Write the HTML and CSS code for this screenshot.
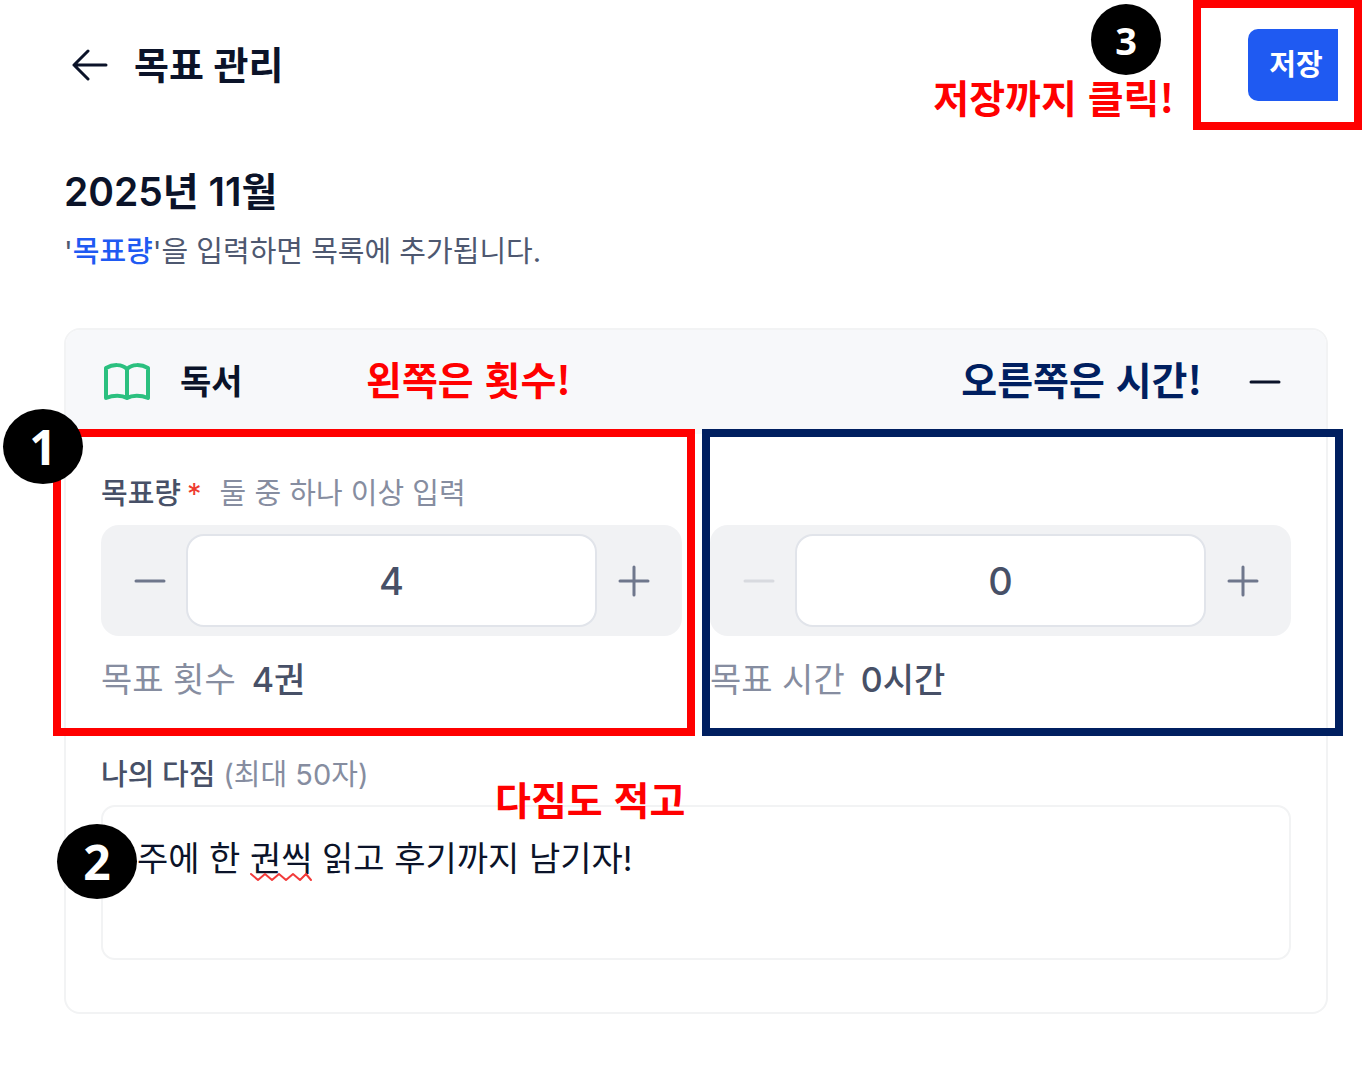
FILE: index.html
```html
<!DOCTYPE html>
<html lang="ko">
<head>
    <meta charset="UTF-8">
    <meta name="viewport" content="width=device-width, initial-scale=1">
    <title>목표 관리</title>

    <link rel="stylesheet" href="styles.css">
</head>
<body>
    <header class="topbar">
        <a class="back" href="#" aria-label="뒤로">
            <svg width="36" height="32" viewBox="0 0 36 32"><path d="M34 16H2M16 2L2 16l14 14"/></svg>
        </a>
        <h1 class="title">목표 관리</h1>
        <button class="save" type="button">저장</button>
        <div class="frame frame-save"></div>
        <span class="badge badge-save">3</span>
        <span class="callout callout-save">저장까지 클릭!</span>
    </header>

    <main class="content">
        <h2 class="month">2025년 11월</h2>
        <p class="guide">'<span class="accent">목표량</span>'을 입력하면 목록에 추가됩니다.</p>

        <section class="card">
            <div class="card-header">
                <svg class="book" width="46" height="38" viewBox="0 0 46 38">
                    <path d="M23 6C18 1 9 1 2 5v30c7-3 16-3 21 0 5-3 14-3 21 0V5C37 1 28 1 23 6zM23 6v29"/>
                </svg>
                <h3 class="card-title">독서</h3>
                <button class="icon-button collapse" type="button" aria-label="접기">
                    <svg class="icon" viewBox="0 0 24 24"><path d="M5 12h14"/></svg>
                </button>
                <span class="callout callout-count">왼쪽은 횟수!</span>
                <span class="callout callout-time">오른쪽은 시간!</span>
            </div>

            <div class="card-body">
                <div class="label-row">
                    <label class="label" for="count">목표량</label>
                    <span class="required">*</span>
                    <span class="hint">둘 중 하나 이상 입력</span>
                </div>

                <div class="goals">
                    <div class="goal">
                        <div class="stepper">
                            <button class="icon-button" type="button" aria-label="횟수 줄이기">
                                <svg class="icon" viewBox="0 0 24 24"><path d="M5 12h14"/></svg>
                            </button>
                            <input id="count" class="amount" type="text" inputmode="numeric" value="4">
                            <button class="icon-button" type="button" aria-label="횟수 늘리기">
                                <svg class="icon" viewBox="0 0 24 24"><path d="M5 12h14M12 5v14"/></svg>
                            </button>
                        </div>
                        <div class="total"><span class="total-name">목표 횟수</span><span>4권</span></div>
                        <div class="frame frame-count"></div>
                        <span class="badge badge-count">1</span>
                    </div>
                    <div class="goal">
                        <div class="stepper">
                            <button class="icon-button" type="button" aria-label="시간 줄이기" disabled>
                                <svg class="icon" viewBox="0 0 24 24"><path d="M5 12h14"/></svg>
                            </button>
                            <input id="time" class="amount" type="text" inputmode="numeric" value="0" aria-label="목표 시간">
                            <button class="icon-button" type="button" aria-label="시간 늘리기">
                                <svg class="icon" viewBox="0 0 24 24"><path d="M5 12h14M12 5v14"/></svg>
                            </button>
                        </div>
                        <div class="total"><span class="total-name">목표 시간</span><span>0시간</span></div>
                        <div class="frame frame-time"></div>
                    </div>
                </div>

                <div class="label-row pledge-label">
                    <label class="label" for="pledge">나의 다짐 <span class="limit">(최대 50자)</span></label>
                </div>
                <div class="pledge">
                    <textarea id="pledge" class="pledge-input" maxlength="50" spellcheck="false">주에 한 권씩 읽고 후기까지 남기자!</textarea>
                    <svg class="squiggle" width="62" height="10" viewBox="0 0 62 10">
                        <path d="M1 2l7 6 7-6 7 6 7-6 7 6 7-6 7 6 6-6 5 6"/>
                    </svg>
                    <span class="badge badge-pledge">2</span>
                    <span class="callout callout-pledge">다짐도 적고</span>
                </div>
            </div>
        </section>
    </main>
</body>
</html>
```
FILE: styles.css
```css
* {
    box-sizing: border-box;
}

body {
    margin: 0;
    background: #ffffff;
    color: #0b1329;
    font-family: Inter, "Noto Sans CJK KR", sans-serif;
    font-size: 34px;
    line-height: 48px;
}

h1, h2, h3, p {
    margin: 0;
}

button, input, textarea {
    font: inherit;
    color: inherit;
}

svg {
    display: block;
    fill: none;
    stroke: currentColor;
    stroke-linecap: round;
    stroke-linejoin: round;
}

/* top bar */
.topbar {
    position: relative;
    display: flex;
    align-items: center;
    height: 130px;
    padding: 0 24px 0 72px;
}

.back {
    color: #0b1329;
    stroke-width: 3px;
}

.title {
    flex: 1;
    margin-left: 26px;
    font-size: 38px;
    font-weight: 600;
}

.save {
    width: 90px;
    height: 72px;
    padding: 0 0 0 6px;
    border: 0;
    border-radius: 10px 0 0 10px;
    background: #1f5af2;
    color: #ffffff;
    font-size: 29px;
    font-weight: 600;
}

.content {
    padding: 36px 34px 48px 64px;
}

.month {
    font-size: 39px;
    font-weight: 600;
    line-height: 52px;
}

.guide {
    margin-top: 13px;
    color: #4e5870;
    font-size: 29px;
    line-height: 42px;
}

.accent {
    color: #1f5af2;
    font-weight: 500;
}

/* card */
.card {
    margin-top: 55px;
    border: 2px solid #f2f3f4;
    border-radius: 16px;
}

.card-header {
    position: relative;
    display: flex;
    align-items: center;
    height: 104px;
    padding: 0 36px 0 38px;
    border-radius: 14px 14px 0 0;
    background: #f7f8fa;
}

.book {
    color: #2bc07f;
    stroke-width: 4px;
}

.card-title {
    flex: 1;
    margin-left: 30px;
    font-size: 34px;
    font-weight: 600;
}

.card-body {
    padding: 39px 35px 52px;
}

.label-row {
    display: flex;
    color: #475067;
    font-size: 29px;
    line-height: 42px;
}

.label {
    font-weight: 500;
}

.required {
    margin-left: 6px;
    color: #ee3b2f;
}

.hint {
    margin-left: 18px;
}

.hint, .limit, .total-name {
    color: #868da0;
    font-weight: 400;
}

.goals {
    display: grid;
    grid-template-columns: repeat(2, minmax(0, 1fr));
    gap: 28px;
    margin-top: 10px;
}

.goal {
    position: relative;
}

.stepper {
    display: flex;
    height: 111px;
    padding: 9px 12px;
    border-radius: 18px;
    background: #f1f2f4;
}

.icon-button {
    display: flex;
    align-items: center;
    justify-content: center;
    flex: 0 0 73px;
    padding: 0;
    border: 0;
    background: none;
    color: #6f778c;
}

.icon-button:disabled {
    color: #d8dadf;
}

.collapse {
    flex-basis: 50px;
    color: #0b1329;
}

.icon {
    width: 48px;
    height: 48px;
    stroke-width: 1.5px;
}

.amount {
    flex: 1;
    min-width: 0;
    padding: 0;
    border: 2px solid #e1e4ea;
    border-radius: 18px;
    background: #ffffff;
    color: #475067;
    font-size: 38px;
    font-weight: 500;
    text-align: center;
}

.total {
    display: flex;
    gap: 16px;
    margin-top: 20px;
    color: #475067;
    font-weight: 500;
}

.pledge-label {
    margin-top: 50px;
}

.pledge {
    position: relative;
    margin-top: 9px;
}

.pledge-input {
    display: block;
    width: 100%;
    height: 155px;
    padding: 28px 34px;
    border: 2px solid #f2f3f4;
    border-radius: 14px;
    background: #ffffff;
    outline: 0;
    resize: none;
}

.squiggle {
    position: absolute;
    top: 67px;
    left: 149px;
    color: #f23a3a;
    stroke-width: 2px;
}

/* tutorial marks over the page */
.frame {
    position: absolute;
    border: 8px solid #ff0000;
    pointer-events: none;
}

.frame-save {
    top: 0;
    right: 0;
    width: 169px;
    height: 130px;
}

.frame-count {
    inset: -96px -13px -32px -48px;
}

.frame-time {
    inset: -96px -52px -32px -8px;
    border-color: #001f60;
}

.badge {
    position: absolute;
    display: flex;
    align-items: center;
    justify-content: center;
    width: 80px;
    height: 75px;
    border-radius: 50%;
    background: #000000;
    color: #ffffff;
    font-family: "Noto Sans", sans-serif;
    font-size: 48px;
    font-weight: 700;
}

.badge-save {
    top: 4px;
    right: 201px;
    width: 70px;
    height: 71px;
    font-size: 38px;
}

.badge-count {
    top: -116px;
    left: -98px;
}

.badge-pledge {
    top: 19px;
    left: -44px;
}

.callout {
    position: absolute;
    color: #ff0000;
    font-family: "Noto Sans CJK KR", sans-serif;
    font-size: 39px;
    font-weight: 700;
    white-space: nowrap;
}

.callout-save {
    top: 72px;
    right: 188px;
}

.callout-count {
    top: 24px;
    left: 300px;
}

.callout-time {
    top: 24px;
    right: 124px;
    color: #001f60;
}

.callout-pledge {
    top: -31px;
    left: 394px;
}
```
